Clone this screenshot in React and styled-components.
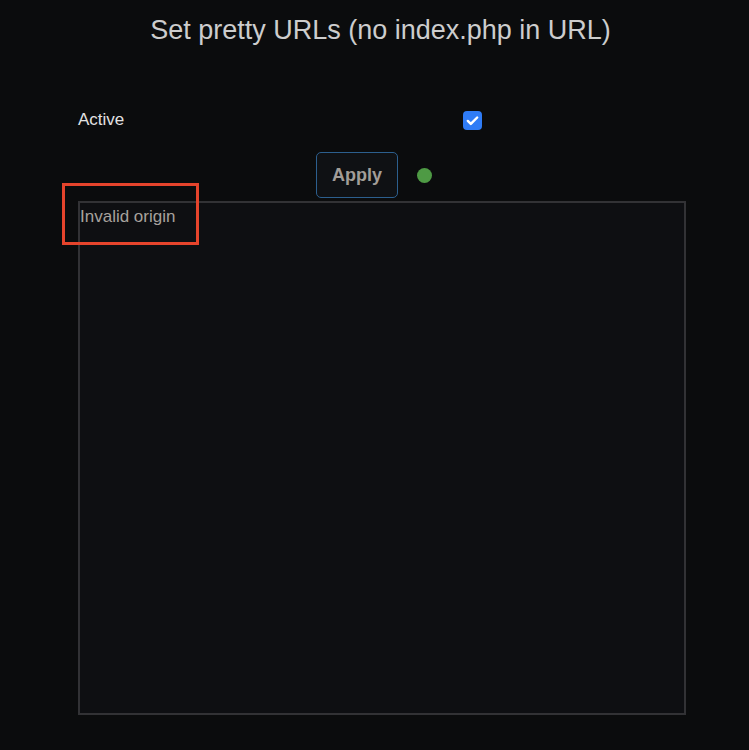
import React from "react";
import styled, { createGlobalStyle } from "styled-components";

const GlobalStyle = createGlobalStyle`
  html, body {
    margin: 0;
    padding: 0;
    background: #0b0c0d;
  }
  body {
    font-family: "Liberation Sans", Arial, sans-serif;
    color: #d0d0d0;
  }
`;

const Page = styled.div`
  width: 749px;
  height: 750px;
  box-sizing: border-box;
  padding-top: 14px;
  position: relative;
`;

const Title = styled.h1`
  margin: 0;
  text-align: center;
  font-size: 27px;
  font-weight: 300;
  line-height: 32px;
  color: #cdcdcd;
  padding-left: 12px;
`;

const Form = styled.div`
  margin: 64px 0 0 78px;
  width: 608px;
  display: flex;
  flex-direction: column;
`;

const FieldRow = styled.label`
  display: grid;
  grid-template-columns: 385px auto;
  align-items: center;
  height: 20px;
  font-size: 17px;
  color: #e2e2e2;
`;

const Check = styled.span`
  width: 19px;
  height: 19px;
  border-radius: 4px;
  background: #2f7cf6;
  display: flex;
  align-items: center;
  justify-content: center;
`;

const Actions = styled.div`
  display: flex;
  justify-content: center;
  align-items: center;
  gap: 19px;
  margin-top: 22px;
  padding-right: 16px;
`;

const Button = styled.button`
  width: 82px;
  height: 46px;
  box-sizing: border-box;
  background: #0f1114;
  border: 1.5px solid #2c5f8e;
  border-radius: 5px;
  font-family: "Liberation Sans", Arial, sans-serif;
  font-size: 18px;
  font-weight: 700;
  color: #a29d98;
`;

const Dot = styled.span`
  width: 15px;
  height: 15px;
  border-radius: 50%;
  background: ${(p) => p.color};
`;

const Output = styled.div`
  margin-top: 3px;
  height: 514px;
  box-sizing: border-box;
  border: 2px solid #323235;
  background: #0e0f12;
  padding: 4px 0 0 0;
  font-size: 17px;
  color: #a7a29d;
`;

const Highlight = styled.div`
  position: absolute;
  left: 62px;
  top: 183px;
  width: 137px;
  height: 62px;
  box-sizing: border-box;
  border: 3px solid #e5442c;
  pointer-events: none;
`;

export default function App() {
  return (
    <Page>
      <GlobalStyle />
      <Title>Set pretty URLs (no index.php in URL)</Title>
      <Form>
        <FieldRow>
          <span>Active</span>
          <Check>
            <svg width="15" height="15" viewBox="0 0 16 16">
              <path d="M3 8.5l3.2 3.2L13 4.8" fill="none" stroke="#fff" strokeWidth="2.6" strokeLinecap="round" strokeLinejoin="round" />
            </svg>
          </Check>
        </FieldRow>
        <Actions>
          <Button>Apply</Button>
          <Dot color="#4e9a44" />
        </Actions>
        <Output>Invalid origin</Output>
      </Form>
      <Highlight />
    </Page>
  );
}
